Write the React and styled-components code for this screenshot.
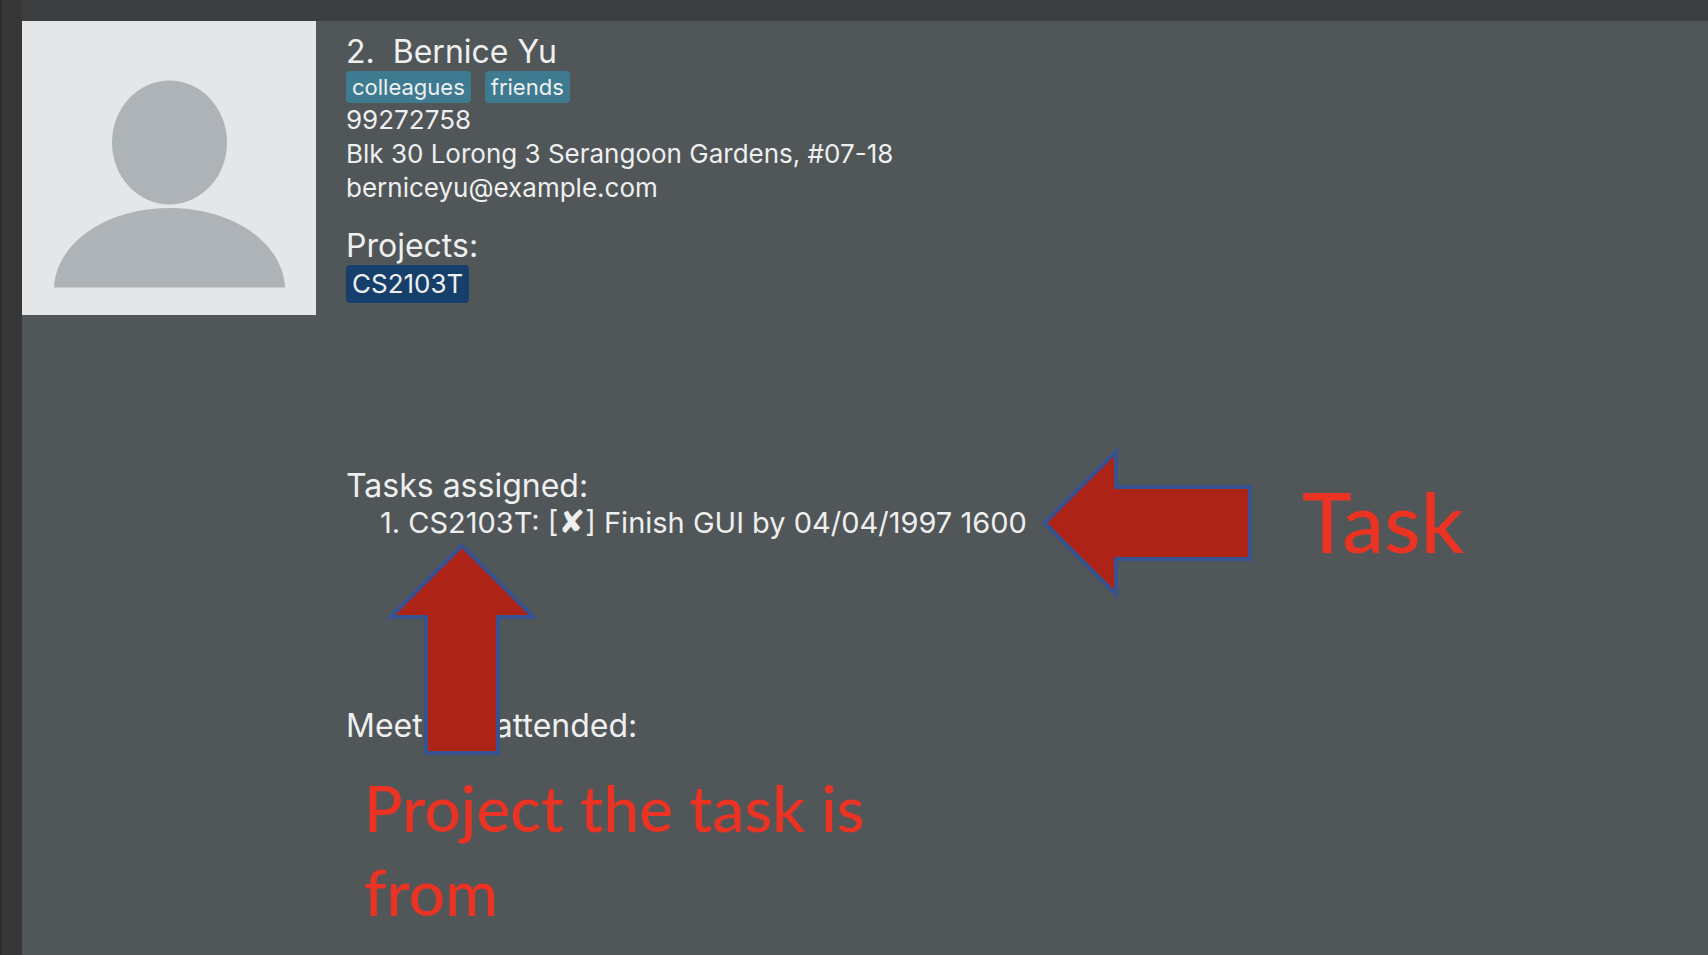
import React from "react";
import styled, { createGlobalStyle } from "styled-components";

const GlobalStyle = createGlobalStyle`
  * { box-sizing: border-box; }
  body {
    margin: 0;
    background: #515658;
    color: #eeefef;
    font-family: Inter, "DejaVu Sans", sans-serif;
  }
  h1, h2, p, ul, ol { margin: 0; padding: 0; font-weight: 400; }
`;

const Window = styled.div`
  position: relative;
  min-height: 100vh;
  display: flex;
  overflow: hidden;
`;

const Gutter = styled.div`
  flex: 0 0 22px;
  background: #383737;
  border-left: 2px solid #2d2d2d;
`;

const Main = styled.main`
  flex: 1;
  min-width: 0;
  border-top: 21px solid #3d3e40;
`;

const Card = styled.article`
  display: flex;
  align-items: flex-start;
  gap: 30px;
`;

const Avatar = styled.svg`
  flex: none;
  width: 294px;
  height: 294px;
  background: #e4e6e8;
`;

const Details = styled.div`
  flex: 1;
  min-width: 0;
  padding-top: 12px;
`;

const Name = styled.h1`
  font-size: 32px;
  line-height: 38px;
  white-space: pre;
`;

const TagList = styled.ul`
  display: flex;
  gap: 14px;
  list-style: none;
`;

const Tag = styled.li`
  padding: 0 6px;
  border-radius: 4px;
  background: ${(p) => (p.$project ? "#173f6b" : "#3e7b91")};
  font-size: ${(p) => (p.$project ? 26 : 22)}px;
  line-height: ${(p) => (p.$project ? 38 : 32)}px;
`;

const Field = styled.p`
  font-size: 26px;
  line-height: 34px;
`;

const Sections = styled.div`
  margin-top: 22px;
`;

const Section = styled.section`
  min-height: 240px;
`;

const Heading = styled.h2`
  font-size: 32px;
  line-height: 38px;
`;

const TaskList = styled.ol`
  padding-left: 34px;
  list-style: none;
  font-size: 29px;
  line-height: 36px;
`;

const StatusMark = styled.span`
  font-family: "DejaVu Sans", sans-serif;
  font-size: 32px;
  font-weight: 700;
  line-height: 1;
`;

const Arrow = styled.svg`
  position: absolute;
  left: ${(p) => p.$x}px;
  top: ${(p) => p.$y}px;
  fill: #ae2318;
  stroke: #37538f;
  stroke-width: 4;
  stroke-miterlimit: 10;
`;

const Callout = styled.p`
  position: absolute;
  left: ${(p) => p.$x}px;
  top: ${(p) => p.$y}px;
  width: 510px;
  color: #ea3323;
  font-family: Lato, "Liberation Sans", sans-serif;
  font-size: ${(p) => p.$size}px;
  font-weight: 500;
  line-height: 84px;
`;

export default function App() {
  return (
    <Window>
      <GlobalStyle />
      <Gutter />
      <Main>
        <Card>
          <Avatar viewBox="0 0 294 294" role="img" aria-label="Profile picture">
            <g fill="#aeb3b7">
              <ellipse cx="147.500" cy="121.500" rx="57.500" ry="62" />
              <path d="M32 266.500C34 222 84 187 147.500 187S261 222 263 266.500Z" />
            </g>
          </Avatar>
          <Details>
            <Name>{"2.  Bernice Yu"}</Name>
            <TagList>
              <Tag>colleagues</Tag>
              <Tag>friends</Tag>
            </TagList>
            <Field>99272758</Field>
            <Field>Blk 30 Lorong 3 Serangoon Gardens, #07-18</Field>
            <Field>berniceyu@example.com</Field>
            <Sections>
              <Section>
                <Heading>Projects:</Heading>
                <TagList>
                  <Tag $project>CS2103T</Tag>
                </TagList>
              </Section>
              <Section>
                <Heading>Tasks assigned:</Heading>
                <TaskList>
                  <li>
                    1. CS2103T: [<StatusMark>✘</StatusMark>] Finish GUI by 04/04/1997 1600
                  </li>
                </TaskList>
              </Section>
              <Section>
                <Heading>Meetings attended:</Heading>
              </Section>
            </Sections>
          </Details>
        </Card>
      </Main>
      <Arrow $x={1040} $y={444} width="214" height="158" aria-hidden="true">
        <path d="M4.500 79L76 7.500V43H210V115H76V150.500Z" />
      </Arrow>
      <Callout $x={1302} $y={479} $size={84}>Task</Callout>
      <Arrow $x={383} $y={541} width="158" height="216" aria-hidden="true">
        <path d="M79 4.500L150.500 76H115V212H43V76H7.500Z" />
      </Arrow>
      <Callout $x={364} $y={766} $size={64}>Project the task is from</Callout>
    </Window>
  );
}
